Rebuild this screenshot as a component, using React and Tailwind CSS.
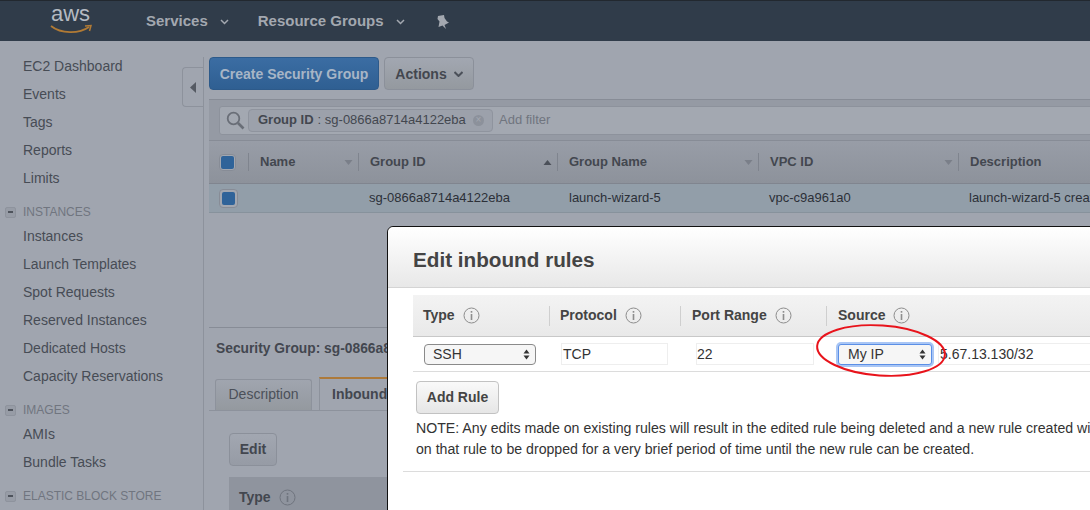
import React from 'react';

const font = { fontFamily: '"Liberation Sans", Arial, sans-serif' };

function NavItem({ children }) {
    return <div className="h-7 pl-[23px] leading-7 text-[14px] text-[#474c55] whitespace-nowrap">{children}</div>;
}

function NavGroup({ label }) {
    return (
        <div className="flex items-center h-5 mt-[10px] pl-[5px] text-[12px] text-[#70757f] whitespace-nowrap">
            <span className="flex items-center justify-center w-[11px] h-[11px] mr-[7px] rounded-[2px] border border-[#8e939d] bg-[#979ca6]">
                <span className="block w-[5px] h-[2px] bg-[#4e535c]"></span>
            </span>
            {label}
        </div>
    );
}

function SortCaret({ up }) {
    return (
        <svg width="9" height="5" viewBox="0 0 9 5" className="shrink-0">
            <path d={up ? 'M0.5 5 L4.5 0 L8.5 5 Z' : 'M0.5 0 L4.5 5 L8.5 0 Z'} fill={up ? '#4b5059' : '#7a7f89'} />
        </svg>
    );
}

function HeadCell({ width, label, up }) {
    return (
        <div className={`flex items-center h-[18px] shrink-0 border-r border-[#7f848e] pl-[11px] ${width}`}>
            <span className="text-[13px] font-bold text-[#43474f] whitespace-nowrap">{label}</span>
            <span className="flex ml-auto mr-[5px]"><SortCaret up={up} /></span>
        </div>
    );
}

function CheckBox({ size = 'w-[19px] h-[19px]' }) {
    return (
        <span className={`flex items-center justify-center rounded-[4px] border border-[#878c96] bg-[#a2a7b0] ${size}`}>
            <span className="block w-[13px] h-[13px] rounded-[2px] bg-[#2f6399]"></span>
        </span>
    );
}

function InfoIcon({ dim }) {
    const c = dim ? '#6f747e' : '#8d8d8d';
    return (
        <svg width="17" height="17" viewBox="0 0 17 17" className="shrink-0">
            <circle cx="8.5" cy="8.5" r="7.5" fill="none" stroke={c} strokeWidth="1" />
            <rect x="7.7" y="7" width="1.6" height="6" fill={c} />
            <rect x="7.7" y="4" width="1.6" height="1.7" fill={c} />
        </svg>
    );
}

function SelectArrows() {
    return (
        <svg width="7" height="11" viewBox="0 0 7 11" className="shrink-0">
            <path d="M0.5 4.5 L3.5 0.5 L6.5 4.5 Z M0.5 6.5 L3.5 10.5 L6.5 6.5 Z" fill="#333" />
        </svg>
    );
}

function RuleHead({ width, label, pad = 'pl-[10px]' }) {
    return (
        <div className={`flex items-center h-5 shrink-0 border-r border-[#cfcfcf] ${pad} ${width}`}>
            <span className="text-[14px] font-bold text-[#444] mr-[8px] whitespace-nowrap">{label}</span>
            <InfoIcon />
        </div>
    );
}

export default function App() {
    return (
        <div style={font} className="relative w-[1090px] h-[510px] overflow-hidden bg-[#a0a5af]">
            {/* top bar */}
            <div className="flex items-center h-[41px] pt-[1px] bg-[#303c4a] border-t border-[#22282f]">
                <div className="relative w-[146px] h-[39px] shrink-0">
                    <span className="absolute left-[51px] top-[0px] text-[22px] leading-[24px] text-[#b5bac2]">aws</span>
                    <svg width="42" height="11" viewBox="0 0 42 11" className="absolute left-[50px] top-[22px]">
                        <path d="M1 2 C 11 10, 29 10, 39 3" fill="none" stroke="#b07a35" strokeWidth="1.8" />
                        <path d="M35 2 L41 1.5 L39.5 7" fill="none" stroke="#b07a35" strokeWidth="1.5" />
                    </svg>
                </div>
                <span className="text-[15px] font-bold text-[#a3a8b0]">Services</span>
                <svg width="9" height="6" viewBox="0 0 9 6" className="ml-[12px]">
                    <path d="M1 1 L4.5 4.5 L8 1" fill="none" stroke="#a3a8b0" strokeWidth="1.5" />
                </svg>
                <span className="ml-[29px] text-[15px] font-bold text-[#a3a8b0]">Resource Groups</span>
                <svg width="9" height="6" viewBox="0 0 9 6" className="ml-[12px]">
                    <path d="M1 1 L4.5 4.5 L8 1" fill="none" stroke="#a3a8b0" strokeWidth="1.5" />
                </svg>
                <svg width="13" height="14" viewBox="0 0 13 14" className="ml-[31px]">
                    <path d="M2 1 L8 0 L8.5 3 L11 6.5 L13 7.5 L8.5 10 L10 14 L6.5 10.5 L2.5 12 L3.5 6.5 L1.5 4 Z" fill="#a3a8b0" />
                </svg>
            </div>

            <div className="flex h-[469px]">
                {/* sidebar */}
                <aside className="relative w-[203px] shrink-0 pt-[11px]">
                    <NavItem>EC2 Dashboard</NavItem>
                    <NavItem>Events</NavItem>
                    <NavItem>Tags</NavItem>
                    <NavItem>Reports</NavItem>
                    <NavItem>Limits</NavItem>
                    <NavGroup label="INSTANCES" />
                    <NavItem>Instances</NavItem>
                    <NavItem>Launch Templates</NavItem>
                    <NavItem>Spot Requests</NavItem>
                    <NavItem>Reserved Instances</NavItem>
                    <NavItem>Dedicated Hosts</NavItem>
                    <NavItem>Capacity Reservations</NavItem>
                    <NavGroup label="IMAGES" />
                    <NavItem>AMIs</NavItem>
                    <NavItem>Bundle Tasks</NavItem>
                    <NavGroup label="ELASTIC BLOCK STORE" />
                    <div className="absolute right-0 top-[26px] z-10 flex items-center justify-center w-[21px] h-[40px] rounded-l-[4px] border border-r-0 border-[#8d929c] bg-[#a0a5af]">
                        <svg width="6" height="11" viewBox="0 0 6 11"><path d="M6 0 L0 5.5 L6 11 Z" fill="#555a63" /></svg>
                    </div>
                </aside>
                <div className="w-px mt-[16px] shrink-0 bg-[#8d929c]"></div>

                {/* main */}
                <main className="flex-1 min-w-0 flex flex-col">
                    <div className="flex items-start h-[58px] pl-[5px] pt-[16px]">
                        <button className="w-[170px] h-[33px] pt-[1px] rounded-[4px] border border-[#2d5a8a] bg-gradient-to-b from-[#3b6da3] to-[#2f5f92] text-[14px] font-bold text-[#a7b5c6]">Create Security Group</button>
                        <button className="flex items-center justify-center gap-[7px] ml-[5px] w-[90px] h-[33px] pt-[1px] rounded-[4px] border border-[#8b909a] bg-gradient-to-b from-[#a2a7b1] to-[#94999f] text-[14px] font-bold text-[#43474f]">
                            Actions
                            <svg width="9" height="6" viewBox="0 0 9 6"><path d="M0.5 1 L4.5 5 L8.5 1" fill="none" stroke="#4b5059" strokeWidth="2" /></svg>
                        </button>
                    </div>

                    <div className="ml-[5px] h-[42px] pl-[10px] pt-[6px] bg-[#959aa4] border-t border-b border-[#878c96]">
                        <div className="flex items-center w-[900px] h-[29px] pl-[6px] pb-[1px] bg-[#a3a8b1] border border-[#8d929c] rounded-l-[3px]">
                            <svg width="19" height="19" viewBox="0 0 19 19" className="shrink-0">
                                <circle cx="7.5" cy="7.5" r="5.8" fill="none" stroke="#696e77" strokeWidth="1.8" />
                                <path d="M12 12 L17.5 17.5" stroke="#696e77" strokeWidth="2.6" />
                            </svg>
                            <div className="flex items-center ml-[3px] h-[23px] w-[245px] pl-[9px] rounded-[4px] border border-[#8f949e] bg-[#9ca1ab] text-[13px] text-[#43474f] whitespace-nowrap">
                                <span className="font-bold">Group ID</span>
                                <span className="ml-[4px]">: sg-0866a8714a4122eba</span>
                                <span className="flex items-center justify-center ml-[7px] w-[11px] h-[11px] rounded-full bg-[#8c919b] text-[10px] leading-none text-[#a3a8b1]">×</span>
                            </div>
                            <span className="ml-[6px] text-[13px] text-[#70757f]">Add filter</span>
                        </div>
                    </div>

                    {/* table head */}
                    <div className="ml-[5px] flex items-center h-[43px] bg-gradient-to-b from-[#989da7] to-[#8d929b] border-b border-[#80858f] whitespace-nowrap">
                        <div className="flex items-center h-[18px] w-[40px] shrink-0 pl-[10px] border-r border-[#7f848e]"><CheckBox size="w-[17px] h-[17px]" /></div>
                        <HeadCell width="w-[110px]" label="Name" />
                        <HeadCell width="w-[199px]" label="Group ID" up />
                        <HeadCell width="w-[201px]" label="Group Name" />
                        <HeadCell width="w-[200px]" label="VPC ID" />
                        <div className="pl-[11px] text-[13px] font-bold text-[#43474f]">Description</div>
                    </div>

                    {/* selected row */}
                    <div className="ml-[5px] flex items-center h-[29px] bg-[#929ea9] border-b border-[#87929c] text-[13px] text-[#2c3038] whitespace-nowrap">
                        <div className="w-[160px] shrink-0 pl-[10px]"><CheckBox /></div>
                        <div className="w-[200px] shrink-0">sg-0866a8714a4122eba</div>
                        <div className="w-[200px] shrink-0">launch-wizard-5</div>
                        <div className="w-[200px] shrink-0">vpc-c9a961a0</div>
                        <div className="w-[121px] shrink-0 overflow-hidden">launch-wizard-5 created 2018</div>
                    </div>

                    {/* details pane */}
                    <div className="ml-[5px] mt-[114px] flex-1 min-h-0 border-t border-[#878c96]">
                        <div className="h-[50px] pl-[7px] pt-[13px] text-[13.8px] leading-[16px] font-bold text-[#43474f] whitespace-nowrap">Security Group: sg-0866a8714a4122eba</div>
                        <div className="flex items-end h-[33px] pl-[6px] border-b border-[#8d929c]">
                            <div className="flex items-center justify-center w-[97px] h-[31px] pb-[1px] rounded-t-[3px] border border-b-0 border-[#8d929c] bg-gradient-to-b from-[#a0a5af] to-[#94999f] text-[14px] text-[#4b5059]">Description</div>
                            <div className="ml-[7px] flex items-center pl-[12px] w-[120px] h-[33px] border-x border-t-2 border-x-[#8d929c] border-t-[#ad7a3b] bg-[#a0a5af] text-[14px] font-bold text-[#43474f]">Inbound</div>
                        </div>
                        <button className="block ml-[20px] mt-[22px] w-[48px] h-[33px] rounded-[4px] border border-[#8b909a] bg-gradient-to-b from-[#a2a7b1] to-[#969ba5] text-[14px] font-bold text-[#43474f]">Edit</button>
                        <div className="flex items-center gap-[8px] ml-[20px] mt-[11px] pl-[10px] h-[40px] bg-[#8f949e] text-[14px] font-bold text-[#43474f]">
                            Type <InfoIcon dim />
                        </div>
                    </div>
                </main>
            </div>

            {/* modal */}
            <div className="absolute left-[387px] top-[226px] w-[760px] h-[300px] rounded-tl-[6px] border border-[#111] bg-white">
                <div className="flex items-center h-[61px] pl-[25px] pt-[5px] border-b border-[#d4d4d4] rounded-tl-[6px] bg-gradient-to-b from-[#ffffff] to-[#e8e8e8] text-[20.7px] font-bold text-[#444]">Edit inbound rules</div>
                <div className="ml-[15px] pt-[7px]">
                    <div className="ml-[10px]">
                        <div className="flex items-center h-[42px] bg-gradient-to-b from-[#f3f3f3] to-[#e9e9e9] border-b border-[#c8c8c8]">
                            <RuleHead width="w-[137px]" label="Type" />
                            <RuleHead width="w-[131px]" label="Protocol" />
                            <RuleHead width="w-[146px]" label="Port Range" pad="pl-[11px]" />
                            <div className="flex items-center h-5 pl-[11px]">
                                <span className="text-[14px] font-bold text-[#444] mr-[8px]">Source</span>
                                <InfoIcon />
                            </div>
                        </div>
                        <div className="flex items-center h-[35px] border-b border-[#dcdcdc] text-[14px] text-[#333]">
                            <div className="flex items-center justify-between shrink-0 ml-[11px] w-[112px] h-[21px] pl-[8px] pr-[5px] rounded-[4px] border border-[#8a8a8a] bg-[#f6f6f6]">
                                SSH <SelectArrows />
                            </div>
                            <div className="flex items-center shrink-0 ml-[25px] w-[107px] h-[22px] pl-[1px] border border-[#eeeeee]">TCP</div>
                            <div className="flex items-center shrink-0 ml-[28px] w-[118px] h-[22px] border border-[#eeeeee]">22</div>
                            <div className="flex items-center justify-between shrink-0 ml-[24px] w-[94px] h-[21px] pl-[9px] pr-[5px] rounded-[3px] border border-[#5b8fe6] bg-[#f6f6f6] shadow-[0_0_0_2px_#a9c6f5]">
                                My IP <SelectArrows />
                            </div>
                            <div className="flex items-center shrink-0 ml-[6px] w-[240px] h-[22px] pl-[1px] border border-[#eeeeee]">5.67.13.130/32</div>
                        </div>
                        <button className="block ml-[3px] mt-[9px] w-[83px] h-[33px] rounded-[4px] border border-[#c2c2c2] bg-gradient-to-b from-[#f9f9f9] to-[#e6e6e6] text-[14px] font-bold text-[#444]">Add Rule</button>
                        <div className="ml-[3px] mt-[4px] w-[674px] h-[42px] overflow-hidden text-[14.15px] leading-[21px] text-[#333] whitespace-nowrap">
                            <p>NOTE: Any edits made on existing rules will result in the edited rule being deleted and a new rule created with the new details. This will cause traffic</p>
                            <p>on that rule to be dropped for a very brief period of time until the new rule can be created.</p>
                        </div>
                    </div>
                    <div className="mt-[11px] border-t border-[#dcdcdc]"></div>
                </div>
            </div>

            {/* red annotation */}
            <svg width="136" height="58" viewBox="0 0 136 58" className="absolute left-[813px] top-[322px]">
                <ellipse cx="68" cy="28.5" rx="64" ry="25" fill="none" stroke="#e8131b" strokeWidth="2" transform="rotate(4 68 28.5)" />
            </svg>
        </div>
    );
}
